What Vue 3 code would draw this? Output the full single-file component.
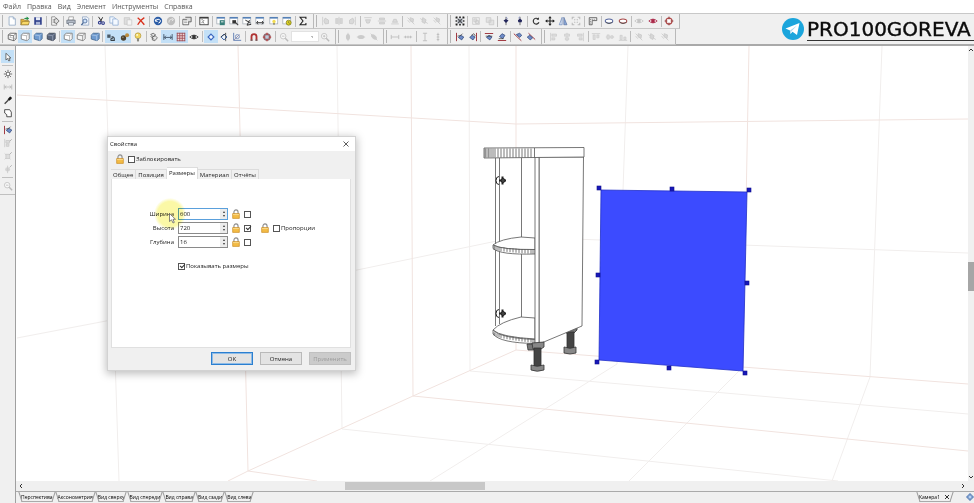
<script setup>
import { ref } from 'vue'

const menu = ['Файл', 'Правка', 'Вид', 'Элемент', 'Инструменты', 'Справка']

const box = (f, s, side) =>
  `<path d="M1.5 3.5L4 1.5H11V8L8.500 10.500L1.500 8.500Z" fill="${f}" stroke="${s}"/><path d="M1.500 3.500L8 4.500L11 1.500M8 4.500V10.500" fill="none" stroke="${side}"/>`
const eye = (c) =>
  `<path d="M1 6Q6 1.500 11 6Q6 10.500 1 6Z" fill="#fff" stroke="${c}"/><circle cx="6" cy="6" r="2.300" fill="${c}"/>`
const win = (extra) =>
  `<rect x="1" y="1.500" width="9.500" height="8" fill="#fff" stroke="#9aa3ad" stroke-width=".8"/><path d="M1 2.200H10.500" stroke="#4a7ab5" stroke-width="1.800"/>${extra}`
const ring = (c) =>
  `<ellipse cx="6" cy="6" rx="4.500" ry="2.500" fill="#fff" stroke="${c}" stroke-width="1.300"/><path d="M2 7.500Q6 11 10 7.500" fill="none" stroke="#555"/>`
const zoomGlass =
  '<circle cx="5" cy="5" r="3.300" fill="#f8f8f8" stroke="#c0c0c0"/><path d="M7.500 7.500L11 11" stroke="#bbb" stroke-width="1.700"/><path d="M3.500 5H6.500" stroke="#bbb"/>'
const g = '#cacaca'

const icons = {
  page: '<path d="M2.500 1H7.500L10 3.500V11H2.500Z" fill="#fff" stroke="#94a9c4"/><path d="M7.500 1V3.500H10" fill="none" stroke="#94a9c4"/>',
  open: '<path d="M1 4H4.500L5.500 5H10V10.500H1Z" fill="#e3b43c" stroke="#7e6220" stroke-width=".7"/><path d="M1 10.500L3 6.500H11.500L10 10.500Z" fill="#f8d868" stroke="#7e6220" stroke-width=".6"/><path d="M5 3.500Q5 1.800 8 2V.5L11 3L8 5.200V3.700Z" fill="#249048"/>',
  save: '<path d="M1.500 1.500H10.500V10.500H1.500Z" fill="#32428c"/><path d="M3.500 1.500H8.500V5H3.500Z" fill="#e8ecf6"/><path d="M3.500 7H8.500V10.500H3.500Z" fill="#aab4d6"/>',
  report: '<path d="M2 1H6L8 3V11H2Z" fill="#fff" stroke="#666" stroke-width=".8"/><path d="M5 4L8 3L11 6L8 9L5 8Z" fill="#ddd" stroke="#444" stroke-width=".8"/><path d="M3 4H5M3 6H5M3 8H5" stroke="#888" stroke-width=".7"/>',
  print: '<path d="M3.500 1H9L8.500 5H3Z" fill="#fff" stroke="#777" stroke-width=".7"/><path d="M1 5H11V9H1Z" fill="#b2bac6" stroke="#5b6470" stroke-width=".8"/><path d="M3 8H9V11H3Z" fill="#eaf0f8" stroke="#5b6470" stroke-width=".7"/>',
  preview: '<path d="M3 1H8.500L10.500 3V11H3Z" fill="#eef4fc" stroke="#8299b8" stroke-width=".8"/><circle cx="6" cy="6" r="2.400" fill="#cfe2f8" stroke="#4a6a98"/><path d="M4.200 8L1.500 11" stroke="#4a6a98" stroke-width="1.500"/>',
  cut: '<path d="M3 1L7 7M8 1.500L5 7" stroke="#333" stroke-width="1.200"/><circle cx="4.500" cy="8" r="1.600" fill="none" stroke="#303c8c" stroke-width="1.300"/><circle cx="8.500" cy="8.500" r="1.600" fill="none" stroke="#303c8c" stroke-width="1.300"/>',
  copy: '<path d="M1 1H5.500L7.500 3V8.500H1Z" fill="#f4f9ff" stroke="#7ea0cc" stroke-width=".8"/><path d="M4.500 3.500H9L11 5.500V11H4.500Z" fill="#f4f9ff" stroke="#7ea0cc" stroke-width=".8"/>',
  paste: '<path d="M1.500 2H8V10H1.500Z" fill="#dedede" stroke="#c2c2c2" stroke-width=".8"/><path d="M5 4.500H10.500V11H5Z" fill="#f4f4f4" stroke="#c2c2c2" stroke-width=".8"/>',
  del: '<path d="M2 2Q6 5 10 10.500M10 2Q5 5 2 10.500" fill="none" stroke="#d8301c" stroke-width="1.600"/>',
  undo: '<circle cx="6" cy="6" r="5" fill="#2b5ca6"/><path d="M4 3.500L2.500 6L5.500 6.500M3 6Q6 2 9 5.500Q9 8 6.500 8.500" fill="none" stroke="#fff" stroke-width="1.200"/>',
  redo: '<circle cx="6" cy="6" r="5" fill="#bdbdbd"/><path d="M3.500 8Q3 4 6.500 4H8M7 2.500L9 4.500L7 6" fill="none" stroke="#e6e6e6" stroke-width="1.200"/>',
  props: '<path d="M1 4H8V10.500H1Z" fill="#fff" stroke="#444" stroke-width=".9"/><path d="M4 1.500H11V7H8" fill="#ddd" stroke="#444" stroke-width=".9"/><path d="M2.500 6H6.500M2.500 8H6.500" stroke="#777" stroke-width=".8"/>',
  window: '<rect x="1" y="1.500" width="10" height="9" fill="#fff" stroke="#333"/><path d="M1 2.200H11" stroke="#333" stroke-width="1.600"/><path d="M3 4.500H4.500M6 5L4.500 7L6 9M3 8H4" fill="none" stroke="#444" stroke-width=".9"/>',
  w1: win('<path d="M4.500 5H10.500V11H4.500Z" fill="#377f7a"/><path d="M6 7H9" stroke="#fff"/>'),
  w2: win('<path d="M4 5H8.500V9H4Z" fill="#333"/><path d="M8 8L11 11" stroke="#444" stroke-width="1.300"/>'),
  w3: win('<path d="M4 5L10 8M9 5L6 11L11 10" stroke="#333" fill="none" stroke-width="1.200"/>'),
  w4: win('<path d="M2 8H10M3.500 6L2 8L3.500 10M8.500 6L10 8L8.500 10" stroke="#333" fill="none" stroke-width="1.100"/>'),
  w5: win('<circle cx="6" cy="6.500" r="2" fill="#f2dc50"/><path d="M6 8.500V10.500" stroke="#77703c" stroke-width="1.500"/>'),
  w6: win('<circle cx="8" cy="8" r="3" fill="#d9cf22" stroke="#756f1a" stroke-width=".8"/><path d="M8 6.500V8L9 9" fill="none" stroke="#444" stroke-width=".7"/>'),
  sigma: '<path d="M9.500 3.500V1.500H2.500L6 6L2.500 10.500H9.500V8.500" fill="none" stroke="#222" stroke-width="1.300"/>',
  gl: `<path d="M2 1V11" stroke="${g}"/><path d="M5 2.500L9 5V9L5 9.500L3.500 6Z" fill="#dadada" stroke="${g}"/>`,
  gm: `<path d="M6 1V11" stroke="${g}"/><path d="M2 3H5V9H2ZM7 3H10V9H7Z" fill="#d6d6d6" stroke="${g}" stroke-width=".7"/>`,
  gr: `<path d="M10 1V11" stroke="${g}"/><path d="M7 2.500L3 5V9L7 9.500L8.500 6Z" fill="#dadada" stroke="${g}"/>`,
  gt: `<path d="M1.500 2H10.500" stroke="${g}"/><path d="M3 4.500H9L7.500 8.500H4.500Z" fill="#dadada" stroke="${g}"/>`,
  gc: `<path d="M1 6H11" stroke="${g}"/><path d="M3 2.500H9V4.500H3ZM3 7.500H9V9.500H3Z" fill="#dadada" stroke="${g}"/>`,
  gb: `<path d="M1.500 9.500H10.500" stroke="${g}"/><path d="M3 7.500H9L7.500 4H4.500Z" fill="#dadada" stroke="${g}"/>`,
  gd: `<path d="M2 2L10 10" stroke="${g}"/><path d="M5 2L9 3.500L8.500 7.500L5 6ZM2 5L4.500 8" fill="#d6d6d6" stroke="${g}"/>`,
  gdm: `<path d="M1.500 3L10.500 9" stroke="${g}"/><path d="M4.500 2L8.500 4.500L7 9L3.500 7Z" fill="#d6d6d6" stroke="${g}"/>`,
  galL: `<path d="M2 1V11" stroke="${g}"/><path d="M3.500 2.500H9V5H3.500ZM3.500 7H7V9.500H3.500Z" fill="#dedede" stroke="${g}" stroke-width=".8"/>`,
  galC: `<path d="M6 1V11" stroke="${g}"/><path d="M3 2.500H9V5H3ZM4 7H8V9.500H4Z" fill="#dedede" stroke="${g}" stroke-width=".8"/>`,
  galR: `<path d="M10 1V11" stroke="${g}"/><path d="M3 2.500H8.500V5H3ZM5 7H8.500V9.500H5Z" fill="#dedede" stroke="${g}" stroke-width=".8"/>`,
  galT: `<path d="M1 2H11" stroke="${g}"/><path d="M2.500 3.500H5V9H2.500ZM7 3.500H9.500V7H7Z" fill="#dedede" stroke="${g}" stroke-width=".8"/>`,
  galM: `<path d="M1 6H11" stroke="${g}"/><path d="M2.500 3.500H5V8.500H2.500ZM7 4.500H9.500V7.500H7Z" fill="#dedede" stroke="${g}" stroke-width=".8"/>`,
  galB: `<path d="M1 10H11" stroke="${g}"/><path d="M2.500 4H5V9H2.500ZM7 6H9.500V9H7Z" fill="#dedede" stroke="${g}" stroke-width=".8"/>`,
  selbox: '<path d="M3 3H9V9H3Z" fill="#8f949e"/><path d="M1 1.500H11M1 10.500H11M1.500 1V11M10.500 1V11" stroke="#222" stroke-width="1.600" stroke-dasharray="2 2"/><path d="M3 3L9 9M9 3L3 9" stroke="#333" stroke-width=".8"/>',
  grp: `<path d="M2 2H10V10H2Z" fill="none" stroke="${g}"/><path d="M3.500 3.500H7V7H3.500ZM5.500 5.500H9V9H5.500Z" fill="#e2e2e2" stroke="${g}"/>`,
  ungrp: `<path d="M1.500 2H7V7.500H1.500ZM5 5H10.500V10.500H5Z" fill="#e2e2e2" stroke="${g}"/>`,
  pinL: '<path d="M6 1V11" stroke="#555"/><path d="M3 5.500L6 3.500L9 5.500L6 8.500Z" fill="#23265c"/><path d="M6 1.500L8 3" stroke="#7f8cc4"/>',
  pinR: '<path d="M6 1V11" stroke="#555"/><path d="M3.500 5L6 3L8.500 5L8 7.500H4Z" fill="#23265c"/><path d="M4 2.500L6 1" stroke="#7f8cc4"/>',
  rotate: '<path d="M8.500 3.500A3.500 3.500 0 1 0 9.500 7.500" fill="none" stroke="#333" stroke-width="1.400"/><path d="M6.500 4.500H9.500V1.500Z" fill="#333"/>',
  move: '<path d="M6 1V11M1 6H11" stroke="#222" stroke-width="1.300"/><path d="M6 .3L8 2.800H4ZM6 11.700L8 9.200H4ZM.3 6L2.800 4V8ZM11.700 6L9.200 4V8Z" fill="#222"/>',
  mirror: '<path d="M5 1.500V10.500H1.500Z" fill="#d7e3f4" stroke="#6a86b8" stroke-width=".8"/><path d="M7 1.500V10.500H10.800Z" fill="#8aa6d6" stroke="#56709e" stroke-width=".8"/>',
  spread: '<path d="M1.500 4V1.500H4M8 1.500H10.500V4M10.500 8V10.500H8M4 10.500H1.500V8M4 4L5 5M8 4L7 5M4 8L5 7M8 8L7 7" fill="none" stroke="#bbb" stroke-width="1.300"/>',
  corner: '<path d="M1.500 2H10.500V5.500H5V10.500H1.500Z" fill="#eee" stroke="#444" stroke-width=".9"/><path d="M3 4H9M3 4V9" stroke="#444" stroke-width=".7" stroke-dasharray="1 1"/>',
  ringB: ring('#5868a0'),
  ringR: ring('#a84848'),
  eyeG: eye('#c3c3c3'),
  eyeR: eye('#aa2848'),
  eyeB: eye('#333'),
  target: '<circle cx="6" cy="6" r="3.600" fill="#fff" stroke="#b04c4c" stroke-width="1.500"/><path d="M6 .8V4M6 8V11.200M.8 6H4M8 6H11.200" stroke="#8f3838" stroke-width="1.200"/>',
  boxA: box('#f4f4f4', '#777', '#888'),
  boxB: box('#fff', '#777', '#aaa'),
  boxC: box('#6f9bd0', '#41658f', '#a8c4e6'),
  boxD: box('#5d6980', '#3c4350', '#96a0b4'),
  boxE: box('#fff', '#555', '#666') + '<path d="M4 1.500V6.500L1.500 8.500M4 6.500L11 8" fill="none" stroke="#999" stroke-width=".7"/>',
  texA: '<path d="M1.500 3H5.500V7H1.500Z" fill="#4b5a66"/><path d="M6.500 6Q10.500 5 10 10H6Q5 7 8.500 7.500" fill="none" stroke="#3a4248" stroke-width="1.300"/>',
  bomb: '<circle cx="4.200" cy="7.200" r="3.200" fill="#4c4130"/><circle cx="8.500" cy="4" r="2.400" fill="#bb8a3c"/><circle cx="3.500" cy="6.300" r="1" fill="#a0906e"/>',
  bulb: '<circle cx="6" cy="4.500" r="3.500" fill="#f1d660" stroke="#a58a34" stroke-width=".7"/><path d="M6 7.500V11.300" stroke="#8a8a80" stroke-width="2.500"/><circle cx="5" cy="3.500" r="1.100" fill="#fffbe0"/>',
  link: '<path d="M2 3L5 1.500L8 3.500L5 5.500ZM4 6L7.500 4.500L10 7L7 10.500L4 9.500Z" fill="#e4e4e4" stroke="#555" stroke-width=".9"/><path d="M2 5L6 9" stroke="#555"/>',
  dim: '<path d="M1 2.500V9.500M11 2.500V9.500M1.500 6.500H10.500M3.500 4.500L1.500 6.500L3.500 8.500M8.500 4.500L10.500 6.500L8.500 8.500" fill="none" stroke="#44566a" stroke-width="1.100"/>',
  grid: '<path d="M1.500 1.500H10.500V10.500H1.500Z" fill="#f3dcdc"/><path d="M1.500 1V11M4.500 1V11M7.500 1V11M10.500 1V11M1 1.500H11M1 4.500H11M1 7.500H11M1 10.500H11" stroke="#9c4a52"/>',
  snapA: '<path d="M6 2.500L9.500 6L6 9.500L2.500 6Z" fill="#eef6ff" stroke="#3a66c0" stroke-width="1.400"/>',
  snapB: '<path d="M6 2.500L9.500 6L6 9.500L2.500 6Z" fill="#eef6ff" stroke="#345fa6" stroke-width="1.200"/><path d="M8 1V11M2 6L8 2" stroke="#333" stroke-width=".9"/>',
  snapC: '<path d="M2 1V10H11" fill="none" stroke="#6a86b8" stroke-width="1.200"/><circle cx="6.500" cy="5.500" r="2.400" fill="none" stroke="#6a86b8"/><path d="M2 10L9 3" stroke="#88a"/>',
  magnet: '<path d="M3 10.500V5.500A3 3 0 0 1 9 5.500V10.500" fill="none" stroke="#b03434" stroke-width="2.200"/><path d="M2 9.800H4.200M7.800 9.800H10" stroke="#666" stroke-width="1.600"/>',
  buoy: '<circle cx="6" cy="6" r="3.500" fill="#bcd" stroke="#8f6870" stroke-width="2"/><path d="M6 1V4M6 8V11M1 6H4M8 6H11" stroke="#b44" stroke-width="1.500"/>',
  glass: zoomGlass,
  glass2: zoomGlass + '<path d="M5 3.500V6.500" stroke="#bbb"/>',
  gel: `<ellipse cx="6" cy="6" rx="2.500" ry="3.500" fill="#ccc"/><path d="M6 1V11" stroke="${g}"/>`,
  gel2: `<ellipse cx="6" cy="6" rx="4" ry="2.500" fill="#ccc"/><path d="M1 6H11" stroke="${g}"/>`,
  gel3: `<ellipse cx="6" cy="6" rx="4" ry="2.300" transform="rotate(40 6 6)" fill="#ccc"/><path d="M2 2L10 10" stroke="${g}"/>`,
  gw: '<path d="M1.500 3.500V8.500M10.500 3.500V8.500M1.500 6H10.500" stroke="#bbb"/>',
  gw2: '<path d="M1 6H11" stroke="#bbb"/><path d="M3 4.500V7.500M6 4.500V7.500M9 4.500V7.500" stroke="#bbb"/>',
  gh: '<path d="M3.500 1.500H8.500M3.500 10.500H8.500M6 1.500V10.500" stroke="#bbb"/>',
  gh2: '<path d="M6 1V11" stroke="#bbb"/><path d="M4.500 3H7.500M4.500 6H7.500M4.500 9H7.500" stroke="#bbb"/>',
  alL: '<path d="M1.800 1V11" stroke="#a23c44" stroke-width="1.200"/><path d="M4 6.500L7 4L10.500 6L8 9.500Z" fill="#6f8cc8" stroke="#30487c" stroke-width=".9"/><path d="M3 5L7 4L9 2" fill="none" stroke="#333" stroke-width=".8"/>',
  alR: '<path d="M10.200 1V11" stroke="#a23c44" stroke-width="1.200"/><path d="M2 6.500L5 4L8.500 6L6 9.500Z" fill="#6f8cc8" stroke="#30487c" stroke-width=".9"/><path d="M4 4L7 2L9 5" fill="none" stroke="#333" stroke-width=".8"/>',
  alT: '<path d="M1 1.800H11" stroke="#a23c44" stroke-width="1.200"/><path d="M3 6.500L6 4L9.500 6L7 9.500Z" fill="#6f8cc8" stroke="#30487c" stroke-width=".9"/><path d="M2 5H10" stroke="#333" stroke-width=".8"/>',
  alB: '<path d="M1 10.200H11" stroke="#a23c44" stroke-width="1.200"/><path d="M3 5.500L6 2L9.500 4L7 8Z" fill="#6f8cc8" stroke="#30487c" stroke-width=".9"/><path d="M2 8H8" stroke="#333" stroke-width=".8"/>',
  alD: '<path d="M1 2L10 10.500" stroke="#a23c44" stroke-width="1.200"/><path d="M4 3L8 1.500L10.500 4L8 6.500Z" fill="#6f8cc8" stroke="#30487c" stroke-width=".9"/>',
  alE: '<path d="M3 1.500L11 9" stroke="#a23c44" stroke-width="1.200"/><path d="M1.500 6L4.500 4L8 7L5 9.500Z" fill="#6f8cc8" stroke="#30487c" stroke-width=".9"/>',
  arrow: '<path d="M3.500 1.500V9.500L5.500 7.800L7 10.800L8.500 10L7 7.200H9.500Z" fill="#fff" stroke="#444" stroke-width=".9"/>',
  burst: '<circle cx="6" cy="6" r="2.300" fill="#fff" stroke="#444"/><path d="M6 1V3M6 9V11M1 6H3M9 6H11M2.500 2.500L4 4M8 8L9.500 9.500M9.500 2.500L8 4M4 8L2.500 9.500" stroke="#555"/>',
  dimG: '<path d="M1.500 3V9M10.500 3V9M2 6H10M4 4.500L2 6L4 7.500M8 4.500L10 6L8 7.500" fill="none" stroke="#bbb"/>',
  dropper: '<path d="M2 10.500L6.500 6" stroke="#444" stroke-width="1.600"/><path d="M5.500 5L7.500 7L10.500 4.500Q11 2 8.500 1.800Z" fill="#181818"/>',
  shape: '<path d="M2 2H8L10 5V10.500H4.500V8L2 6Z" fill="#fff" stroke="#444" stroke-width="1.100"/>',
  gsA: `<path d="M2 1V11" stroke="${g}"/><path d="M3.500 3H8V6H3.500ZM4 7H7V10H4Z" fill="#ddd" stroke="${g}"/><path d="M8 4L10.500 1.500" stroke="#aaa"/>`,
  gsB: `<path d="M2 3L9 10M9 3L2 10" stroke="${g}"/><path d="M3.500 4H8V9H3.500Z" fill="#ddd" stroke="${g}"/><path d="M8 4L10.500 1.500" stroke="#aaa"/>`,
  gsC: `<ellipse cx="5.500" cy="6.500" rx="3" ry="2.500" fill="#d4d4d4"/><path d="M5.500 2V11" stroke="${g}"/><path d="M8 4L10.500 1.500" stroke="#aaa"/>`
}

/* '|' is a group divider, '*' after a name marks a switched-on button */
const parse = (s) => s.split(' ').map((t) => ({ name: t.replace('*', ''), on: t.endsWith('*') }))
const rows = [
  [
    { size: 'w-a', items: parse('page open save | report | print preview | cut copy paste del | undo redo | props | window | w1 w2 w3 w4 w5 w6 | sigma') },
    { size: 'w-b', items: parse('gl gm gr | gt gc gb | gd gdm gd') },
    { size: 'w-c', items: parse('selbox | grp ungrp | pinL pinR | rotate move mirror spread | corner | ringB ringR | eyeG eyeR | target') }
  ],
  [
    { size: 'w-d', items: parse('boxE boxB* boxC boxD | boxB* boxA boxC | texA* bomb* bulb | link dim* grid* eyeB | snapA* snapB snapC | magnet buoy | glass combo glass2') },
    { size: 'w-e', items: parse('gel gel2 gel3') },
    { size: 'w-f', items: parse('gw gw2 | gh gh2') },
    { size: 'w-g', items: parse('alL alR | alT alB | alD alE') },
    { size: 'w-b', items: parse('galL galC galR | galT galM galB | gd gdm gd') }
  ]
]
const side = parse('arrow* | burst dimG dropper shape | alL gsA gsB gsC | glass')

const lock =
  '<path d="M3.500 6V3.800A2.500 2.800 0 0 1 8.500 3.800V6" fill="none" stroke="#8f8f8f" stroke-width="1.400"/><path d="M2 5.500H10V11.300H2Z" fill="#f3bb45" stroke="#c88a1e" stroke-width=".8"/><path d="M2.500 6.700H9.500" stroke="#fbe19a"/>'

const tabs = ['Общее', 'Позиция', 'Размеры', 'Материал', 'Отчёты']
const activeTab = ref('Размеры')
const locked = ref(false)
const ratio = ref(false)
const showSizes = ref(true)
const fields = ref([
  { id: 'width', label: 'Ширина', value: 600, fixed: false },
  { id: 'height', label: 'Высота', value: 720, fixed: true },
  { id: 'depth', label: 'Глубина', value: 16, fixed: false }
])

const views = ['Перспектива', 'Аксонометрия', 'Вид сверху', 'Вид спереди', 'Вид справа', 'Вид сзади', 'Вид слева']
const view = ref('Перспектива')

const strong = [
  'M17 95L516 124L968 119', 'M516 46V350', 'M238 46L248 471', 'M411 46L413 396', 'M749 46L743 368',
  'M228 481L248 471L413 396L516 350L968 384', 'M413 396L968 451', 'M248 471L317 481'
]
const faint = [
  'M105 46L119 481', 'M337 46L342 429', 'M469 46L470 371', 'M628 46L617 364', 'M882 46L870 377',
  'M17 338L106 321L357 270L516 237L968 253', 'M470 371L968 414', 'M342 429L838 481',
  'M617 364L430 481', 'M743 367L629 481', 'M870 377L832 481'
]
const handles = [[599, 188], [672, 189], [749, 190], [598, 275], [747, 283], [597, 362], [669, 368], [745, 373]]
const slabRibs = [485, 486, 488, 489, 491, 493, 495, 498, 501, 504, 507, 510, 513, 516, 519, 522, 525, 528, 531]
const shelfRibs = [494, 495, 497, 499, 501, 504, 507, 510, 513, 516, 519, 522, 525, 528, 531, 533]
const edgeY = (x, y, drop) => y + drop * Math.sqrt(Math.max(0, (x - 493) / 42))
</script>

<template>
  <div class="app">
    <nav class="menu">
      <button v-for="m in menu" :key="m">{{ m }}</button>
    </nav>

    <header class="bars">
      <div v-for="(row, r) in rows" :key="r" class="bar-row">
        <div v-for="(bar, b) in row" :key="b" class="bar" :class="bar.size">
          <template v-for="(it, i) in bar.items" :key="i">
            <span v-if="it.name === '|'" class="sep"></span>
            <select v-else-if="it.name === 'combo'" class="combo" aria-label="Масштаб"></select>
            <button v-else class="tool" :class="{ on: it.on }" :aria-label="it.name">
              <svg viewBox="0 0 12 12" v-html="icons[it.name]"></svg>
            </button>
          </template>
        </div>
      </div>
      <a class="brand" href="#">
        <svg viewBox="0 0 22 22">
          <circle cx="11" cy="11" r="11" fill="#1ba5dc" />
          <path d="M3.500 10.500L17.500 5L15 17L10.500 13.800L8.500 16L8 12.500Z" fill="#fff" />
          <path d="M8 12.500L15 7.500L9.500 13.200L8.500 16Z" fill="#a9d8ee" />
        </svg>
        <span>PRO100GOREVA</span>
      </a>
    </header>

    <div class="work">
      <aside class="side">
        <template v-for="(it, i) in side" :key="i">
          <span v-if="it.name === '|'" class="rule"></span>
          <button v-else class="tool" :class="{ on: it.on }" :aria-label="it.name">
            <svg viewBox="0 0 12 12" v-html="icons[it.name]"></svg>
          </button>
        </template>
        <span class="rule full"></span>
      </aside>

      <main class="stage">
        <div class="canvas">
          <svg class="scene" viewBox="16 46 952 435" preserveAspectRatio="xMinYMin slice">
            <path v-for="d in faint" :key="d" :d="d" fill="none" stroke="#f1eeed" />
            <path v-for="d in strong" :key="d" :d="d" fill="none" stroke="#f1e3df" />

            <g stroke="#555" stroke-width=".8" fill="#fff">
              <path d="M495 157V325L521 317L535 318V157Z" stroke="none" />
              <path d="M495.500 158V326M499.500 158V324M521.500 158V237M521.500 250V317" />
              <path d="M521 237L535 238V249.500Q502 250 493 245Q500 239 521 237Z" />
              <path d="M493 245Q502 250 535 249.500V254Q500 255 493 248.500Z" />
              <path d="M521 317L535 318V339Q500 337 493 330Q500 322 521 317Z" />
              <path d="M493 330Q500 338 535 339.500V343.500Q500 343 493 334Z" />
              <path v-for="x in shelfRibs" :key="'a' + x" :d="`M${x} ${edgeY(x, 245, 5)}V${edgeY(x, 249, 5)}`" />
              <path v-for="x in shelfRibs" :key="'b' + x" :d="`M${x} ${edgeY(x, 331, 8)}V${edgeY(x, 334, 9)}`" />
            </g>

            <g fill="none" stroke="#222">
              <g v-for="y in [180.500, 313.500]" :key="y">
                <path :d="`M499 ${y - 4}Q496 ${y - 4} 496 ${y}Q496 ${y + 4} 499 ${y + 4}`" />
                <path :d="`M499 ${y}H506M502.500 ${y - 4}V${y + 4}`" stroke-width="2" />
                <circle cx="503" :cy="y" r="2" fill="#444" />
              </g>
            </g>

            <g stroke="#333" stroke-width=".8">
              <path d="M527 344H534V350H528Z" fill="#777" />
              <path d="M565 328L577 324V330L574 333H566Z" fill="#777" />
              <path d="M567 332H574V350H567Z" fill="#444" />
              <path d="M564 347Q570 349.500 576 347V353Q570 355 564 353Z" fill="#888" />
            </g>
            <g stroke="#555" stroke-width=".8" fill="#fff">
              <path d="M539 157L583.500 157L582 326L539 344Z" />
              <path d="M535 157H539V344H535Z" />
              <path d="M484 148L584 147.500V157L484 158Z" />
              <path d="M534.500 148V157.500" />
              <path v-for="x in slabRibs" :key="x" :d="`M${x} 148.500V157.500`" />
            </g>
            <g stroke="#333" stroke-width=".8">
              <path d="M532 343L544 342V347L541 349H533Z" fill="#888" />
              <path d="M534 348H541V367H534Z" fill="#444" />
              <path d="M531 365Q537 367.500 544 365V370Q537 372.500 531 370Z" fill="#888" />
            </g>

            <path d="M601 190L747 192L743 371L599 360Z" fill="#3c4bff" stroke="#2230c8" stroke-width=".8" />
            <rect v-for="([x, y], i) in handles" :key="i" :x="x - 2" :y="y - 2" width="4" height="4" fill="#1818b8" stroke="#10108c" stroke-width=".6" />
          </svg>

          <form class="dialog" @submit.prevent>
            <div class="title">
              <span>Свойства</span>
              <button type="button" class="close" aria-label="Закрыть">
                <svg viewBox="0 0 6 6"><path d="M.5.5L5.500 5.500M5.500.5L.5 5.500" stroke="#333" stroke-width=".8" /></svg>
              </button>
            </div>
            <div class="lock-row">
              <svg class="lock" viewBox="0 0 12 12" v-html="lock"></svg>
              <label><input v-model="locked" type="checkbox" />Заблокировать</label>
            </div>
            <div class="tabs" role="tablist">
              <button v-for="t in tabs" :key="t" type="button" role="tab" :class="{ active: t === activeTab }" @click="activeTab = t">{{ t }}</button>
            </div>
            <div class="page">
              <div class="fields">
                <template v-for="f in fields" :key="f.id">
                  <label class="name" :for="f.id">{{ f.label }}</label>
                  <div class="spin" :class="{ focus: f.id === 'width' }">
                    <input :id="f.id" v-model="f.value" type="text" />
                    <div class="steps">
                      <button type="button" aria-label="Больше" @click="f.value++"><i class="up"></i></button>
                      <button type="button" aria-label="Меньше" @click="f.value--"><i class="down"></i></button>
                    </div>
                  </div>
                  <svg class="lock" viewBox="0 0 12 12" v-html="lock"></svg>
                  <input v-model="f.fixed" type="checkbox" :aria-label="f.label" />
                  <div class="extra">
                    <template v-if="f.id === 'height'">
                      <svg class="lock" viewBox="0 0 12 12" v-html="lock"></svg>
                      <label><input v-model="ratio" type="checkbox" />Пропорции</label>
                    </template>
                  </div>
                </template>
              </div>
              <label class="show"><input v-model="showSizes" type="checkbox" />Показывать размеры</label>
            </div>
            <div class="actions">
              <button class="primary">OK</button>
              <button type="button">Отмена</button>
              <button type="button" disabled>Применить</button>
            </div>
            <span class="spot"></span>
            <svg class="pointer" viewBox="0 0 7 11">
              <path d="M.5.500V8.500L2.500 6.800L4 10L5.300 9.400L4 6.300H6.500Z" fill="#fff" stroke="#555" stroke-width=".7" />
            </svg>
          </form>
        </div>
        <div class="vscroll">
          <svg viewBox="0 0 6 4"><path d="M1 3L3 1L5 3" /></svg>
          <span class="thumb"></span>
          <svg viewBox="0 0 6 4"><path d="M1 1L3 3L5 1" /></svg>
        </div>
        <div class="hscroll">
          <svg viewBox="0 0 4 6"><path d="M3 1L1 3L3 5" /></svg>
          <span class="thumb"></span>
          <svg viewBox="0 0 4 6"><path d="M1 1L3 3L1 5" /></svg>
        </div>
        <footer class="views">
          <button v-for="v in views" :key="v" :class="{ active: v === view }" @click="view = v">{{ v }}</button>
          <button class="camera">Камера1
            <svg viewBox="0 0 6 6"><path d="M1 1L5 5M5 1L1 5" stroke="#333" /></svg>
          </button>
          <button class="add" aria-label="Добавить камеру">
            <svg viewBox="0 0 8 8"><path d="M3 1H5V3H7V5H5V7H3V5H1V3H3Z" fill="#b8d0f0" stroke="#5078b4" /></svg>
          </button>
        </footer>
      </main>
    </div>
  </div>
</template>

<style>
body {
  overflow: hidden;
}
</style>

<style scoped>
* {
  box-sizing: border-box;
}
button,
input,
select {
  font: inherit;
  color: inherit;
  margin: 0;
  padding: 0;
  border: 0;
  background: none;
}
svg {
  display: block;
}
.app {
  display: flex;
  flex-direction: column;
  height: 100vh;
  background: #f0f0f0;
  color: #222;
  font: 6px/8px 'Open Sans', 'Noto Sans', sans-serif;
}
.menu {
  display: flex;
  gap: 6px;
  height: 13px;
  padding: 0 3px;
  background: #fff;
  color: #555;
  font-size: 7px;
}
.bars {
  position: relative;
  height: 33px;
  border-top: 1px solid #c8c8c8;
  border-bottom: 2px solid #a9a9a9;
}
.bar-row {
  display: flex;
  height: 15px;
}
.bar-row + .bar-row {
  height: 16px;
}
.bar {
  position: relative;
  display: flex;
  align-items: center;
  padding: 0 3px 0 5px;
  border-right: 1px solid #b9b9b9;
  border-bottom: 1px solid #c6c6c6;
}
.bar::before {
  content: '';
  position: absolute;
  left: 2px;
  top: 1px;
  bottom: 1px;
  border-left: 1px solid #b5b5b5;
}
.w-a { width: 314px; }
.w-b { width: 134px; }
.w-c { width: 232px; }
.w-d { width: 336px; }
.w-e { width: 48px; }
.w-f { width: 64px; }
.w-g { width: 94px; }
.tool {
  flex: 4 1 0;
  display: flex;
  align-items: center;
  justify-content: center;
  height: 13px;
}
.tool svg {
  width: 10px;
  height: 10px;
}
.tool.on {
  background: #c3e0f7;
}
.sep {
  flex: 1 1 0;
  height: 11px;
  background: linear-gradient(#bdbdbd, #bdbdbd) center / 1px 100% no-repeat;
}
.combo {
  width: 28px;
  height: 11px;
  border: 1px solid #e2e2e2;
  appearance: none;
  background: linear-gradient(45deg, transparent 50%, #bbb 50%) right 5px center / 3px 2px no-repeat, #fff;
}
.brand {
  position: absolute;
  top: 4px;
  left: 782px;
  display: flex;
  gap: 3px;
  color: #0c0c0c;
  font: 20px/22px 'DejaVu Sans', sans-serif;
  text-decoration: none;
  -webkit-text-stroke: 0.4px #0c0c0c;
}
.brand svg {
  width: 22px;
  height: 22px;
}
.brand span {
  padding-right: 4px;
  border-bottom: 1px solid #333;
}
.work {
  flex: 1;
  display: flex;
  min-height: 0;
}
.side {
  display: flex;
  flex-direction: column;
  align-items: center;
  width: 16px;
  padding-top: 4px;
  border-right: 1px solid #a0a0a0;
}
.side .tool {
  flex: none;
  width: 13px;
}
.rule {
  width: 11px;
  margin: 2px 0 1px;
  border-top: 1px solid #c0c0c0;
}
.rule.full {
  width: 100%;
}
.stage {
  flex: 1;
  display: grid;
  grid-template: minmax(0, 1fr) 10px 12px / minmax(0, 1fr) 6px;
  min-width: 0;
}
.canvas {
  position: relative;
  overflow: hidden;
  background: #fff;
}
.scene {
  width: 100%;
  height: 100%;
}
.vscroll {
  display: grid;
  grid-template-rows: 4px 8fr 29px 7fr 4px;
  padding: 2px 0;
}
.vscroll svg,
.hscroll svg {
  flex: none;
  fill: none;
  stroke: #333;
}
.vscroll svg {
  width: 6px;
  height: 4px;
}
.vscroll .thumb {
  grid-row: 3;
  background: #a6a6a6;
}
.vscroll svg:last-child {
  grid-row: 5;
}
.hscroll {
  grid-column: 1 / 3;
  display: flex;
  align-items: center;
  padding: 0 9px 0 3px;
}
.hscroll svg {
  width: 4px;
  height: 6px;
}
.hscroll .thumb {
  width: 140px;
  height: 8px;
  margin-left: 34%;
  margin-right: auto;
  background: #c8c8c8;
}
.views {
  grid-column: 1 / 3;
  display: flex;
  align-items: flex-start;
  gap: 5px;
  padding: 0 0 0 5px;
  border-top: 1px solid #aaa;
  font-size: 5px;
  white-space: nowrap;
}
.views button {
  position: relative;
  height: 9px;
  line-height: 8px;
  color: #000;
}
.views button:not(.add)::before,
.views button:not(.add)::after {
  content: '';
  position: absolute;
  top: 0;
  height: 9px;
  border-bottom: 1px solid #aaa;
}
.views button:not(.add)::before {
  left: -1px;
  right: 50%;
  border-left: 1px solid #999;
  transform: skewX(18deg);
}
.views button:not(.add)::after {
  right: -1px;
  left: 50%;
  border-right: 1px solid #999;
  transform: skewX(-18deg);
}
.views .camera {
  display: flex;
  align-items: center;
  gap: 4px;
  margin-left: auto;
}
.camera svg {
  width: 6px;
  height: 6px;
}
.views .add {
  margin-left: 11px;
}
.add svg {
  width: 8px;
  height: 8px;
}
.dialog {
  position: absolute;
  left: 92px;
  top: 91px;
  display: flex;
  flex-direction: column;
  width: 247px;
  padding: 0 4px 5px 3px;
  background: #f0f0f0;
  box-shadow: 0 0 0 1px #d2d2d2, 0 2px 8px 2px rgba(0, 0, 0, 0.25);
}
.title {
  display: flex;
  align-items: center;
  justify-content: space-between;
  height: 14px;
  margin: 0 -4px 0 -3px;
  padding: 0 6px 0 2px;
  background: #fff;
}
.close svg {
  width: 6px;
  height: 6px;
}
.lock-row {
  display: flex;
  align-items: center;
  gap: 3px;
  height: 16px;
  padding-left: 4px;
}
.lock {
  width: 10px;
  height: 10px;
}
label {
  display: flex;
  align-items: center;
  gap: 1px;
}
input[type='checkbox'] {
  appearance: none;
  flex: none;
  position: relative;
  width: 7px;
  height: 7px;
  background: #fff;
  border: 1px solid #555;
}
input[type='checkbox']:checked::after {
  content: '';
  position: absolute;
  left: 1px;
  top: 0;
  width: 4px;
  height: 2px;
  border: solid #333;
  border-width: 0 0 1px 1px;
  transform: rotate(-45deg);
}
.tabs {
  display: flex;
  align-items: flex-end;
  height: 12px;
}
.tabs button {
  height: 10px;
  padding: 0 2px;
  border: 1px solid #dcdcdc;
  border-width: 1px 1px 0 0;
}
.tabs .active {
  height: 12px;
  padding-bottom: 2px;
  background: #fff;
}
.page {
  display: flex;
  flex-direction: column;
  align-items: flex-start;
  height: 169px;
  padding: 29px 0 0 39px;
  background: #fff;
  border: 1px solid #e0e0e0;
  border-top: 0;
}
.fields {
  display: grid;
  grid-template-columns: 24px 50px 10px 7px auto;
  grid-auto-rows: 12px;
  align-items: center;
  column-gap: 3px;
  row-gap: 2px;
}
.name {
  justify-content: flex-end;
  padding-right: 1px;
}
.spin {
  display: flex;
  height: 12px;
  background: #fff;
  border: 1px solid #8a8a8a;
}
.spin.focus {
  border-color: #5aa0dc;
}
.spin input {
  flex: 1;
  min-width: 0;
  padding-left: 1px;
  outline: 0;
}
.steps {
  display: flex;
  flex-direction: column;
  width: 7px;
  background: #ececec;
}
.steps button {
  flex: 1;
  display: flex;
  align-items: center;
  justify-content: center;
}
.up,
.down {
  border: 1px solid transparent;
}
.up {
  border-bottom: 2px solid #333;
}
.down {
  border-top: 2px solid #333;
}
.extra {
  display: flex;
  align-items: center;
  gap: 3px;
  padding-left: 6px;
}
.show {
  margin: 14px 0 0 27px;
}
.actions {
  display: flex;
  justify-content: flex-end;
  gap: 7px;
  margin-top: 4px;
}
.actions button {
  width: 42px;
  height: 13px;
  background: #e3e3e3;
  border: 1px solid #b9b9b9;
}
.actions .primary {
  border-color: #2b7fd0;
  outline: 1px solid #8ebbe6;
  outline-offset: -2px;
}
.actions button:disabled {
  background: #cbcbcb;
  border-color: #c0c0c0;
  color: #9c9c9c;
}
.spot {
  position: absolute;
  left: 46px;
  top: 61px;
  width: 32px;
  height: 32px;
  border-radius: 50%;
  background: radial-gradient(#fbf8a6 55%, rgba(251, 248, 166, 0) 71%);
  mix-blend-mode: multiply;
  pointer-events: none;
}
.pointer {
  position: absolute;
  left: 61px;
  top: 76px;
  width: 7px;
  height: 11px;
  pointer-events: none;
}
</style>
